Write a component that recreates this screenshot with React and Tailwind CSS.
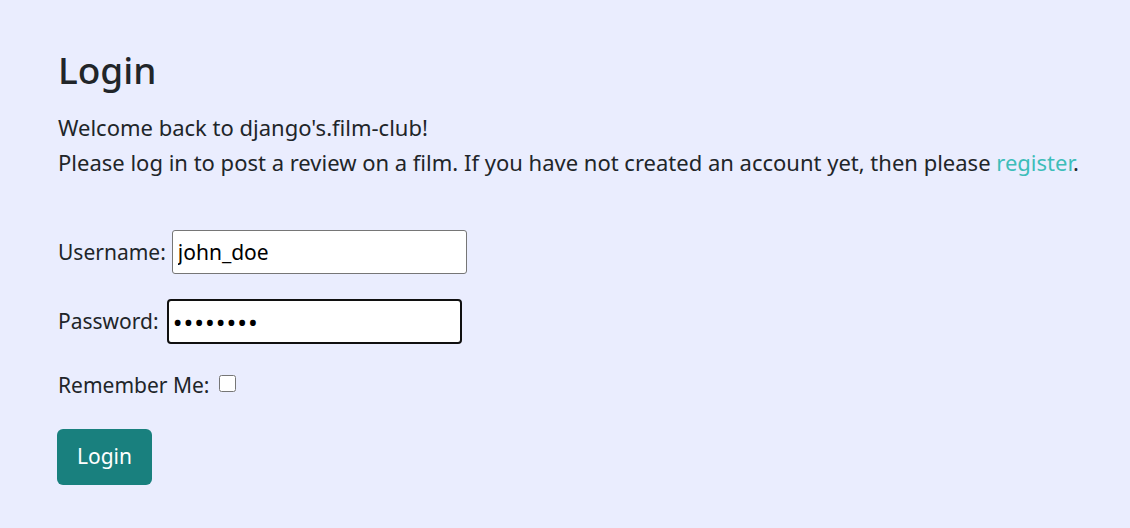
export default function App() {
  return (
    <div className="min-h-[528px] w-full bg-[#eaedfe] text-[#212529]" style={{ fontFamily: '"Noto Sans", "Open Sans", sans-serif' }}>
      <div className="pl-[58px] pt-[48px]">
        <h1 className="text-[37px] leading-[1.2] font-medium mb-[18px]">Login</h1>
        <p className="text-[22px] leading-[35px] whitespace-nowrap">Welcome back to django's.film-club!</p>
        <p className="text-[22px] leading-[35px] whitespace-nowrap">
          Please log in to post a review on a film. If you have not created an account yet, then please{" "}
          <a className="text-[#3dbdb9]" href="#">register</a>.
        </p>
        <form className="mt-[50px] text-[21px]">
          <div className="flex items-center h-[44px]">
            <label className="mr-[6px]">Username:</label>
            <input
              type="text"
              defaultValue="john_doe"
              className="w-[295px] h-[44px] bg-white border border-[#767676] rounded-[3px] px-[5px] text-[21px] text-black outline-none"
            />
          </div>
          <div className="flex items-center h-[45px] mt-[25px]">
            <label className="mr-[8px]">Password:</label>
            <input
              type="password"
              defaultValue="12345678"
              className="w-[295px] h-[45px] bg-white border-2 border-[#101010] rounded-[4px] px-[4px] text-[26px] tracking-[1px] text-black outline-none"
            />
          </div>
          <div className="flex items-center mt-[26px]">
            <label className="mr-[6px]">Remember Me:</label>
            <input type="checkbox" className="w-[17px] h-[17px] -mt-[6px] ml-[4px]" />
          </div>
          <button type="button" className="-ml-px mt-[27px] bg-[#19807e] text-white text-[21px] rounded-[6px] w-[95px] h-[56px]">
            Login
          </button>
        </form>
      </div>
    </div>
  );
}
